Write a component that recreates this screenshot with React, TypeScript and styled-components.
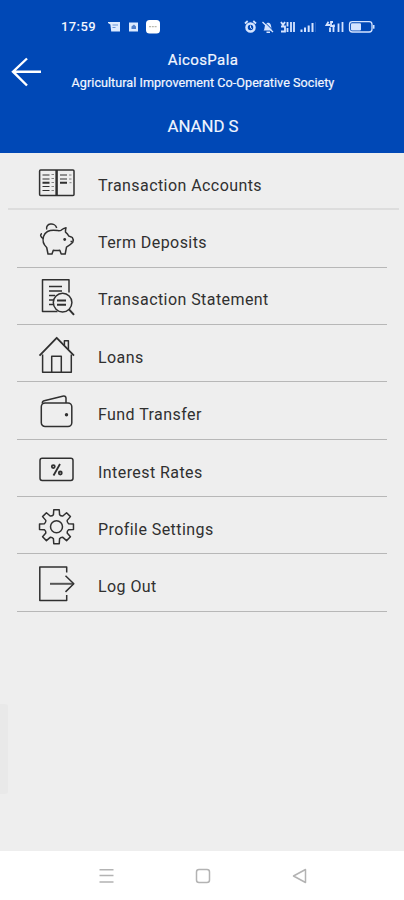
import React from "react";
import styled, { createGlobalStyle } from "styled-components";

const GlobalStyle = createGlobalStyle`
  * { box-sizing: border-box; }
  body { margin: 0; background: #eeeeee; font-family: Roboto, "Liberation Sans", sans-serif; }
`;

const Screen = styled.div`
  position: relative;
  display: flex;
  flex-direction: column;
  width: 404px;
  height: 900px;
  overflow: hidden;
  background: #eeeeee;
`;

const Header = styled.header`
  height: 153px;
  flex: none;
  background: #0048b6;
  color: #f2f6ff;
`;

const StatusBar = styled.div`
  display: flex;
  align-items: center;
  justify-content: space-between;
  height: 46px;
  padding: 7px 28px 0 61px;
`;

const StatusGroup = styled.div`
  display: flex;
  align-items: center;
`;

const Clock = styled.span`
  width: 47px;
  font-size: 13px;
  font-weight: 500;
  letter-spacing: 0.4px;
  line-height: 16px;
`;

const TitleBar = styled.div`
  display: grid;
  grid-template-columns: 52px 1fr 50px;
  height: 54px;
`;

const BackButton = styled.button`
  display: flex;
  padding: 10px 0 0 10px;
  border: 0;
  background: none;
  color: #fff;
`;

const Titles = styled.div`
  display: flex;
  flex-direction: column;
  align-items: center;
  padding-top: 5px;
`;

const AppName = styled.h1`
  margin: 0;
  font-size: 15px;
  font-weight: 400;
  line-height: 18px;
  letter-spacing: 0.4px;
  -webkit-text-stroke: 0.2px;
`;

const Society = styled.p`
  margin: 6px 0 0;
  font-size: 12.6px;
  line-height: 16px;
  white-space: nowrap;
  letter-spacing: 0.04px;
  -webkit-text-stroke: 0.2px;
`;

const Customer = styled.h2`
  margin: 15px 0 0;
  padding-left: 2px;
  font-size: 16.8px;
  font-weight: 400;
  line-height: 22px;
  text-align: center;
  -webkit-text-stroke: 0.15px;
`;

const Menu = styled.nav`
  display: flex;
  flex-direction: column;
  flex: 1;
`;

const MenuRow = styled.a<{ $wide?: boolean }>`
  display: flex;
  flex: none;
  height: 57.35px;
  margin: ${(p) => (p.$wide ? "0 5px 0 8px" : "0 17px")};
  padding-left: ${(p) => (p.$wide ? "28px" : "19px")};
  border-bottom: ${(p) => (p.$wide ? "2px solid #dddddd" : "1px solid #b7b7b7")};
  color: #303030;
`;

const MenuIcon = styled.svg`
  width: 42px;
  height: 56px;
  flex: none;
  fill: none;
  stroke: #303030;
  stroke-width: 1.5;
  stroke-linejoin: round;
`;

const Label = styled.span`
  padding-left: 20px;
  padding-top: 22.8px;
  font-size: 16px;
  line-height: 20px;
  letter-spacing: 0.43px;
  white-space: nowrap;
`;

const EdgeHandle = styled.div`
  position: absolute;
  left: 0;
  top: 704px;
  width: 8px;
  height: 90px;
  border-radius: 0 3px 3px 0;
  background: #e9e9e9;
`;

const SystemNav = styled.footer`
  display: flex;
  justify-content: space-between;
  height: 49px;
  padding: 16px 96px 0 98px;
  background: #fff;
`;

const NavIcon = styled.svg`
  width: 17px;
  height: 17px;
  fill: none;
  stroke: #b3b3b3;
  stroke-width: 1.5;
  stroke-linejoin: round;
`;

const StatusLeft = () => (
  <svg width="54" height="16" viewBox="0 0 54 16">
    <path d="M0 3h12v9.5H3.2L2.4 5.5 0 4z" fill="#dceaff" />
    <path d="M4.5 6h5.5M4.5 8.5h3" stroke="#6b96d8" />
    <rect x="21" y="3.5" width="9" height="9" fill="#dceaff" />
    <path d="M23.5 10V7.5l2.5-2 2 2V10z" fill="#4f7fca" />
    <rect x="38" y="1" width="14" height="13.5" rx="3.5" fill="#fff" />
    <path d="M41 7.7h8" stroke="#b9b9ad" strokeWidth="1.3" strokeDasharray="2 .8" />
  </svg>
);

const StatusRight = () => (
  <svg width="132" height="16" viewBox="0 0 132 16" fill="none" stroke="#d5e4ff">
    <circle cx="6.5" cy="8.5" r="4" strokeWidth="2.5" />
    <path d="M1 4.5 3.7 2M9.3 2 12 4.5" strokeWidth="1.8" />
    <path d="M6.5 6.5v2.3l1.5.8" />
    <path d="M19.5 11.500c1.500-1.300.9-5.300 2.200-6.800 1.400-1.500 3.600-1.300 4.700.2 1.100 1.600.6 5.300 2.300 6.600z" fill="#d5e4ff" stroke="none" />
    <path d="M22.500 13.200h3.500M18.500 3l10.500 10" strokeWidth="1.400" />
    <path d="M19.800 2.200l10 10" stroke="#0048b6" />
    <path d="m37 3 2 3 2-3M37 7.500h4v5h-4M43.500 3v4.500M43.500 9v4M47 3v10M50 3v10" strokeWidth="1.800" />
    <path d="M57.500 10.500V13M61 8.500V13M64.700 6.500V13M68.500 4V13" strokeWidth="2" />
    <path d="M71.500 3v10" stroke="#2561c2" strokeWidth="1" />
    <path d="M84.500 2.800 82.500 6h3.500M89 3h-2v4h3V5.500M86 8.500V13M89.500 7.500V13M94.500 4.500V13M98.500 3V13" strokeWidth="1.800" />
    <rect x="105.500" y="2.700" width="22.500" height="10.300" rx="2.800" strokeWidth="1.300" />
    <rect x="107" y="4.200" width="10" height="7.300" rx="1" fill="#d5e4ff" stroke="none" />
    <path d="M129.700 6v3.700" strokeWidth="1.600" />
  </svg>
);

const gearPath = (() => {
  const cx = 20.5;
  const cy = 29.7;
  const step = Math.PI / 4;
  const at = (r: number, a: number) =>
    `${(cx + r * Math.sin(a)).toFixed(2)} ${(cy - r * Math.cos(a)).toFixed(2)}`;
  const parts: string[] = [];
  for (let i = 0; i < 8; i++) {
    const a = i * step;
    parts.push(
      `${i ? "L" : "M"}${at(12.4, a - 0.25)}L${at(17.2, a - 0.16)}L${at(17.2, a + 0.16)}L${at(12.4, a + 0.25)}` +
        `Q${at(11.3, a + step / 2)} ${at(12.4, a + step - 0.25)}`
    );
  }
  return parts.join("") + "Z";
})();

const BookIcon = () => (
  <>
    <rect x="3.6" y="17" width="34.400" height="25.500" rx="1" />
    <path d="M20.600 17v25.500" strokeWidth="2.500" />
    <path d="M6.500 22h7M6.500 26h7M6.500 33.500h7M6.500 37.500h7M24 22h7M24 26h7" strokeWidth="1.200" />
    <path d="M6.500 29.700h7M24 29.700h7" strokeWidth="1.900" />
    <path d="M15.500 21.500h2.500M15.500 25.500h2.500M15.500 29.500h2.500M15.500 33.500h2.500M15.500 37.500h2.500M33 22h2.500M33 26h2.500M33.500 29.700h2" strokeWidth=".9" stroke="#777" />
  </>
);

const PigIcon = () => (
  <>
    <path d="M11.500 21.500C14 20.200 18.500 20 21.500 20.600c1.500.1 2.500.2 3.500-.3 1.300-1.100 3-2.200 5-2.600-.6 2-.7 3.100-.5 4.400 1.600 1.100 2.600 2.400 3.400 4.100 1 .6 2.600.7 3.400 1.300.9 1.200 1.100 3.400.5 4.700-1.700 1.900-4.200 3.700-6.300 4.900l-1.300 6.900h-4l-1.400-3.800c-2.300.4-4.400.4-6.500 0L16 44h-4L10.700 37.500C7.500 34.500 6.300 30.500 7.500 26.500c.8-2.100 2-3.900 4-5z" />
    <path d="M7.400 28.500C4.500 27.700 3.700 24 6 23.800M10.700 19.500c-1.700-6.500 8.500-7.500 10-1.500" />
    <circle cx="28.700" cy="29.500" r="1.400" fill="#303030" stroke="none" />
    <path d="M34.500 31.500h2" />
  </>
);

const StatementIcon = () => (
  <>
    <path d="M33 24.500V11.700H6.500v31.800h15" />
    <path d="M13 18.500h13M13 23h13M13 27.500h6M13 32h4M13 36.500h4" />
    <circle cx="26.600" cy="34.600" r="9.300" />
    <path d="M21 32.500h9M21 36.800h9" strokeWidth="1.900" />
    <path d="m33 41.300 5 5.500" strokeWidth="2" />
  </>
);

const HomeIcon = () => (
  <>
    <path d="M6.600 29.500v17.700h28.700V29.500" />
    <path d="M3.500 30.700 20.700 12.800 38 30.700" strokeWidth="1.800" />
    <path d="M15.700 47V31.300h9.600V47M28.400 20.200v-4.500h4v8.800" />
  </>
);

const WalletIcon = () => (
  <>
    <rect x="5.300" y="21" width="30.500" height="23.500" rx="3.800" />
    <path d="M6.500 21.500c-.5-1.500.3-2.300 1.700-2.700l18.300-4.600c2-.5 3.200.1 3.500 1.700V21" />
    <circle cx="30.500" cy="32.700" r="1.700" fill="#303030" stroke="none" />
  </>
);

const RatesIcon = () => (
  <>
    <rect x="4" y="18.300" width="33" height="22.200" rx="2.200" />
    <path d="m24 24-6.500 11.500" strokeWidth="1.800" />
    <circle cx="17.300" cy="26.600" r="1.500" strokeWidth="1.800" />
    <circle cx="24.300" cy="33" r="1.500" strokeWidth="1.800" />
  </>
);

const SettingsIcon = () => (
  <>
    <path d={gearPath} />
    <circle cx="20.500" cy="29.700" r="6" />
  </>
);

const LogoutIcon = () => (
  <>
    <path d="M30.700 18.500v-5.500H3.800v33.500h26.900v-5.500" />
    <path d="M14 29.800h23" strokeWidth="2" stroke="#555" />
    <path d="m29.500 21.700 8.300 8.100-8.300 8.100" />
  </>
);

const items = [
  { label: "Transaction Accounts", Icon: BookIcon },
  { label: "Term Deposits", Icon: PigIcon },
  { label: "Transaction Statement", Icon: StatementIcon },
  { label: "Loans", Icon: HomeIcon },
  { label: "Fund Transfer", Icon: WalletIcon },
  { label: "Interest Rates", Icon: RatesIcon },
  { label: "Profile Settings", Icon: SettingsIcon },
  { label: "Log Out", Icon: LogoutIcon },
];

export default function App() {
  return (
    <>
      <GlobalStyle />
      <Screen>
        <Header>
          <StatusBar>
            <StatusGroup>
              <Clock>17:59</Clock>
              <StatusLeft />
            </StatusGroup>
            <StatusRight />
          </StatusBar>
          <TitleBar>
            <BackButton aria-label="Back">
              <svg width="34" height="32" viewBox="0 0 34 32" fill="none" stroke="currentColor" strokeWidth="2.4">
                <path d="M31 15.700H3M17 2.500 3 15.700 17 29.500" />
              </svg>
            </BackButton>
            <Titles>
              <AppName>AicosPala</AppName>
              <Society>Agricultural Improvement Co-Operative Society</Society>
            </Titles>
          </TitleBar>
          <Customer>ANAND S</Customer>
        </Header>
        <Menu>
          {items.map(({ label, Icon }, i) => (
            <MenuRow key={label} $wide={i === 0}>
              <MenuIcon viewBox="0 0 42 56">
                <Icon />
              </MenuIcon>
              <Label>{label}</Label>
            </MenuRow>
          ))}
        </Menu>
        <EdgeHandle />
        <SystemNav>
          <NavIcon viewBox="0 0 17 17">
            <path d="M1.500 2.700h14M1.500 8.500h14M1.500 15h14" />
          </NavIcon>
          <NavIcon viewBox="0 0 17 17">
            <rect x="1.500" y="2.500" width="13" height="13" rx="2.500" />
          </NavIcon>
          <NavIcon viewBox="0 0 17 17">
            <path d="M14.500 2.500v13L2.500 9z" />
          </NavIcon>
        </SystemNav>
      </Screen>
    </>
  );
}
